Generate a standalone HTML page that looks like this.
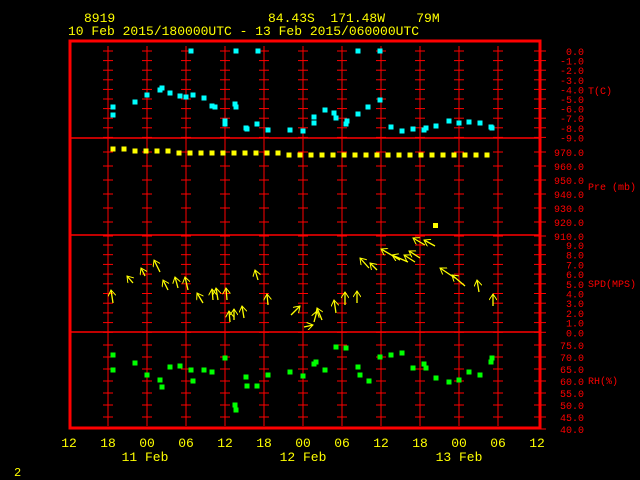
<!DOCTYPE html>
<html><head><meta charset="utf-8"><style>
html,body{margin:0;padding:0;background:#000;width:640px;height:480px;overflow:hidden}
svg{display:block}
text{font-family:"Liberation Mono",monospace;white-space:pre}
</style></head><body>
<svg id="s" width="640" height="480" xmlns="http://www.w3.org/2000/svg">
<defs><marker id="ah" markerWidth="8" markerHeight="8" refX="7" refY="4" orient="auto" markerUnits="userSpaceOnUse"><path d="M1,0 L7,4 L1,8" fill="none" stroke="#ff0" stroke-width="1"/></marker></defs>
<g fill="#ff0" font-size="13">
<text x="84" y="22">8919</text>
<text x="268" y="22" xml:space="preserve">84.43S  171.48W    79M</text>
<text x="68" y="35">10 Feb 2015/180000UTC - 13 Feb 2015/060000UTC</text>
</g>
<g id="grid" stroke="#f00" stroke-width="1"></g>
<rect x="70" y="41" width="470" height="387" fill="none" stroke="#f00" stroke-width="3"/>
<g stroke="#f00" stroke-width="1.5">
<line x1="70" y1="138" x2="540" y2="138"/><line x1="70" y1="235" x2="540" y2="235"/><line x1="70" y1="332" x2="540" y2="332"/>
</g>
<g id="lab" fill="#f00" font-size="10" text-anchor="end"></g>
<g fill="#f00" font-size="10">
<text x="588" y="94">T(C)</text><text x="588" y="190">Pre (mb)</text><text x="588" y="287">SPD(MPS)</text><text x="588" y="384">RH(%)</text>
</g>
<g fill="#ff0" font-size="13" text-anchor="middle">
<text x="69" y="447">12</text><text x="108" y="447">18</text><text x="147" y="447">00</text><text x="186" y="447">06</text><text x="225" y="447">12</text><text x="264" y="447">18</text><text x="303" y="447">00</text><text x="342" y="447">06</text><text x="381" y="447">12</text><text x="420" y="447">18</text><text x="459" y="447">00</text><text x="498" y="447">06</text><text x="537" y="447">12</text>
<text x="145" y="461">11 Feb</text><text x="303" y="461">12 Feb</text><text x="459" y="461">13 Feb</text>
</g>
<text x="14" y="476" fill="#ff0" font-size="12">2</text>
<g id="pts"></g>
<g id="arr" stroke="#ff0" stroke-width="1.3" fill="none"></g>
</svg>
<script>
var NS="http://www.w3.org/2000/svg";
function el(p,t,a,txt){var e=document.createElementNS(NS,t);for(var k in a)e.setAttribute(k,a[k]);if(txt!=null)e.textContent=txt;document.getElementById(p).appendChild(e);}
var levels=[],labels=[];
for(var i=0;i<10;i++){levels.push(51+i*9.6);labels.push((i==0?"0.0":(-i)+".0"));}
for(var i=0;i<7;i++){levels.push(152+i*14);labels.push((970-10*i)+".0");}
for(var i=0;i<10;i++){levels.push(245+i*9.7);labels.push((9-i)+".0");}
for(var i=0;i<8;i++){levels.push(345+i*12);labels.push((75-5*i)+".0");}
var xs=[108,147,186,225,264,303,342,381,420,459,498];
xs.forEach(function(x){
 el("grid","line",{x1:x,y1:46,x2:x,y2:426});
 levels.forEach(function(y){el("grid","line",{x1:x-5,y1:y,x2:x+5,y2:y});});
});
levels.forEach(function(y,i){el("grid","line",{x1:534,y1:y,x2:546,y2:y});el("lab","text",{x:584,y:y+4},labels[i]);});
var T=[[113,107],[113,115],[135,102],[147,95],[160,90],[162,88],[170,93],[180,96],[186,97],[193,95],[204,98],[212,106],[215,107],[225,121],[225,124],[236,107],[235,104],[246,128],[247,129],[257,124],[268,130],[290,130],[303,131],[314,123],[314,117],[325,110],[334,113],[336,118],[346,124],[347,121],[358,114],[368,107],[380,100],[391,127],[402,131],[413,129],[424,130],[426,128],[436,126],[449,121],[459,123],[469,122],[480,123],[491,127],[492,128],[191,51],[236,51],[258,51],[358,51],[380,51]];
T.forEach(function(p){el("pts","rect",{x:p[0]-2.5,y:p[1]-2.5,width:5,height:5,fill:"#0ff"});});
for(var x=113;x<=493;x+=11){var y=x<130?149:(x<170?151:(x<280?153:155));el("pts","rect",{x:x-2.5,y:y-2.5,width:5,height:5,fill:"#ff0"});}
el("pts","rect",{x:433,y:223,width:5,height:5,fill:"#ff0"});
var R=[[113,355],[113,370],[135,363],[147,375],[160,380],[162,387],[170,367],[180,366],[191,370],[193,381],[204,370],[212,372],[225,358],[235,405],[236,410],[246,377],[247,386],[257,386],[268,375],[290,372],[303,376],[314,364],[316,362],[325,370],[336,347],[346,348],[358,367],[360,375],[369,381],[380,357],[391,355],[402,353],[413,368],[424,364],[426,368],[436,378],[449,382],[459,380],[469,372],[480,375],[491,362],[492,358]];
R.forEach(function(p){el("pts","rect",{x:p[0]-2.5,y:p[1]-2.5,width:5,height:5,fill:"#0f0"});});
var A=[[113,303,111,290],[133,283,127,276],[145,276,141,268],[160,272,154,260],[168,290,163,280],[178,288,175,277],[188,290,185,277],[203,303,197,293],[213,300,212,289],[218,300,216,288],[227,300,226,288],[230,322,229,311],[234,320,234,309],[244,318,242,306],[258,280,255,270],[268,305,267,294],[291,315,300,306],[304,327,313,325],[314,322,317,311],[322,320,317,308],[336,313,334,300],[345,305,345,292],[357,303,357,291],[369,268,360,258],[377,270,370,263],[400,260,381,249],[408,262,392,255],[415,262,404,255],[420,258,409,251],[425,245,413,238],[435,246,424,240],[455,278,440,268],[465,286,452,275],[479,292,477,280],[493,306,493,294]];
A.forEach(function(a){el("arr","line",{x1:a[0],y1:a[1],x2:a[2],y2:a[3],"marker-end":"url(#ah)"});});
</script>
</body></html>
